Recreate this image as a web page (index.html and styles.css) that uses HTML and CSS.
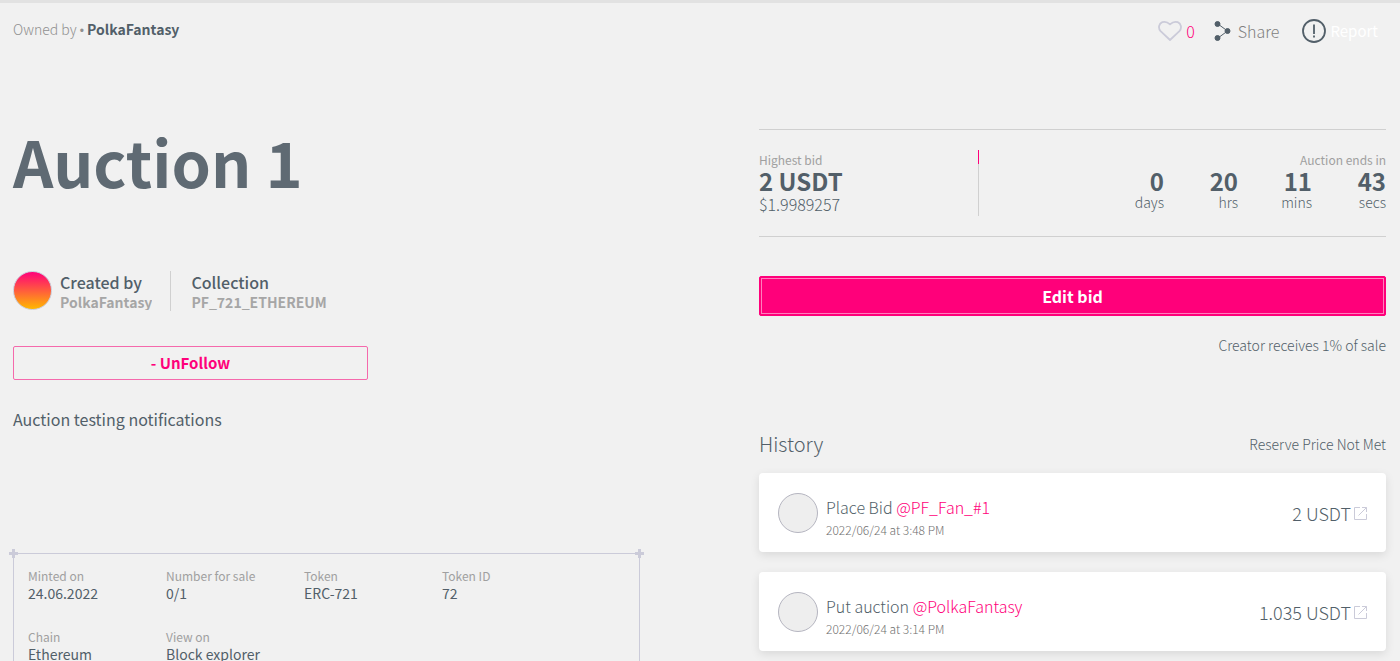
FILE: index.html
```html
<!DOCTYPE html>
<html lang="en">
<head>
    <meta charset="UTF-8">
    <meta name="viewport" content="width=device-width, initial-scale=1.0">
    <title>Auction 1</title>
    <link rel="stylesheet" href="styles.css">
</head>
<body>
    <main class="page">
        <section class="column">
            <div class="owner">Owned by <span class="dot">•</span> <a href="#">PolkaFantasy</a></div>

            <h1>Auction 1</h1>

            <div class="credits">
                <span class="creator-avatar"></span>
                <div class="credit">
                    <h2>Created by</h2>
                    <a href="#">PolkaFantasy</a>
                </div>
                <div class="credit credit-collection">
                    <h2>Collection</h2>
                    <a href="#">PF_721_ETHEREUM</a>
                </div>
            </div>

            <button type="button" class="follow-btn">- UnFollow</button>

            <p class="description">Auction testing notifications</p>

            <dl class="details">
                <div class="detail">
                    <dt>Minted on</dt>
                    <dd>24.06.2022</dd>
                </div>
                <div class="detail">
                    <dt>Number for sale</dt>
                    <dd>0/1</dd>
                </div>
                <div class="detail">
                    <dt>Token</dt>
                    <dd>ERC-721</dd>
                </div>
                <div class="detail">
                    <dt>Token ID</dt>
                    <dd>72</dd>
                </div>
                <div class="detail">
                    <dt>Chain</dt>
                    <dd>Ethereum</dd>
                </div>
                <div class="detail">
                    <dt>View on</dt>
                    <dd><a href="#">Block explorer</a></dd>
                </div>
            </dl>
        </section>

        <section class="column">
            <div class="actions">
                <button type="button" class="action like">
                    <svg width="24" height="22" viewBox="0 0 24 22" fill="none" stroke="#cbcbd9" stroke-width="1.8" stroke-linejoin="round">
                        <path d="M12 20 2.600 11.200C-.2 8 .9 3.600 4.300 2.200 7 1.200 9.500 2 12 4.300 14.500 2 17 1.200 19.700 2.200 23.100 3.600 24.200 8 21.400 11.200Z"/>
                    </svg>
                    <span>0</span>
                </button>
                <button type="button" class="action share">
                    <svg width="18" height="22" viewBox="0 0 18 22" fill="#525f69" stroke="#525f69" stroke-width="1">
                        <path d="M4 4 13.500 11 4 18" fill="none"/>
                        <circle cx="3.500" cy="4" r="2.500"/>
                        <circle cx="13.500" cy="11" r="2.500"/>
                        <circle cx="3.500" cy="18" r="2.500"/>
                    </svg>
                    <span>Share</span>
                </button>
                <button type="button" class="action report">
                    <svg width="24" height="24" viewBox="0 0 24 24" fill="none" stroke="#525f69" stroke-width="1.800">
                        <circle cx="12" cy="12" r="11"/>
                        <path d="M12 5.500V15M12 16.500V18.500"/>
                    </svg>
                    <span>Report</span>
                </button>
            </div>

            <div class="bid-info">
                <div class="highest">
                    <div class="caption">Highest bid</div>
                    <div class="amount">2 USDT</div>
                    <div class="fiat">$1.9989257</div>
                </div>
                <div class="ends">
                    <div class="caption">Auction ends in</div>
                    <div class="countdown">
                        <div class="unit"><div class="amount">0</div>days</div>
                        <div class="unit"><div class="amount">20</div>hrs</div>
                        <div class="unit"><div class="amount">11</div>mins</div>
                        <div class="unit"><div class="amount">43</div>secs</div>
                    </div>
                </div>
            </div>

            <button type="button" class="bid-btn">Edit bid</button>
            <p class="royalty">Creator receives 1% of sale</p>

            <div class="history-header">
                <h2>History</h2>
                <span>Reserve Price Not Met</span>
            </div>

            <div class="history">
                <div class="event">
                    <span class="event-avatar"></span>
                    <div class="event-text">
                        <div class="event-title">Place Bid <a href="#">@PF_Fan_#1</a></div>
                        <div class="event-date">2022/06/24 at 3:48 PM</div>
                    </div>
                    <div class="event-price">2 USDT</div>
                    <a href="#" class="event-link" aria-label="View transaction">
                        <svg width="13" height="13" viewBox="0 0 13 13" fill="none" stroke="#cbcbd9">
                            <path d="M6 .5H.5V12.500H12.500V7M8 .5H12.500V5M12.500.5 4.500 8.500"/>
                        </svg>
                    </a>
                </div>
                <div class="event">
                    <span class="event-avatar"></span>
                    <div class="event-text">
                        <div class="event-title">Put auction <a href="#">@PolkaFantasy</a></div>
                        <div class="event-date">2022/06/24 at 3:14 PM</div>
                    </div>
                    <div class="event-price">1.035 USDT</div>
                    <a href="#" class="event-link" aria-label="View transaction">
                        <svg width="13" height="13" viewBox="0 0 13 13" fill="none" stroke="#cbcbd9">
                            <path d="M6 .5H.5V12.500H12.500V7M8 .5H12.500V5M12.500.5 4.500 8.500"/>
                        </svg>
                    </a>
                </div>
            </div>
        </section>
    </main>
</body>
</html>
```
FILE: styles.css
```css
* {
    box-sizing: border-box;
}
body {
    margin: 0;
    border-top: 3px solid #e2e2e2;
    background-color: #f1f1f1;
    color: #525f69;
    font-family: "Noto Sans CJK SC", "Noto Sans", sans-serif;
    font-size: 14px;
    line-height: 20px;
}
h1, h2, p, dl, dd {
    margin: 0;
}
a {
    color: inherit;
    text-decoration: none;
}
button {
    font-family: inherit;
    cursor: pointer;
}
svg {
    display: block;
}
.page {
    display: grid;
    grid-template-columns: 1fr 1fr;
    column-gap: 119px;
    padding: 16px 14px 0 13px;
}

/* Left column */
.owner {
    color: #909090;
    font-weight: 300;
}
.owner .dot {
    font-family: "Liberation Sans", sans-serif;
    font-size: 12px;
    line-height: 12px;
}
.owner a {
    color: #525f69;
    font-weight: 700;
}
h1 {
    margin-top: 84px;
    color: #5f6a73;
    font-size: 63px;
    line-height: 76px;
    font-weight: 700;
}
.credits {
    display: flex;
    margin-top: 72px;
    height: 40px;
}
.creator-avatar {
    width: 39px;
    height: 39px;
    margin-right: 8px;
    border: 1px solid #cbcbd9;
    border-radius: 50%;
    background: linear-gradient(#ff007a, #ffb800);
}
.credit h2 {
    font-size: 16px;
    line-height: 22px;
    font-weight: 500;
}
.credit a {
    display: block;
    overflow: hidden;
    height: 17px;
    color: #a6a6a6;
    font-weight: 700;
    line-height: 18px;
}
.credit-collection {
    margin-left: 18px;
    padding-left: 20px;
    border-left: 1px solid #d0d0d0;
}
.follow-btn {
    display: block;
    width: 355px;
    max-width: 100%;
    height: 34px;
    margin-top: 35px;
    padding: 0 0 2px;
    border: 1px solid #f569ac;
    border-radius: 2px;
    background: none;
    color: #ff007a;
    font-size: 15px;
    font-weight: 700;
}
.description {
    margin-top: 29px;
    font-size: 16px;
}
.details {
    position: relative;
    display: grid;
    grid-template-columns: repeat(4, 138px);
    row-gap: 26px;
    margin-top: 124px;
    padding: 13px 14px;
    border: 1px solid #cbcbd9;
}
/* Small crosses on the frame corners */
.details::before,
.details::after {
    content: "";
    position: absolute;
    top: -5px;
    width: 9px;
    height: 9px;
    background: linear-gradient(#cbcbd9, #cbcbd9) center / 9px 3px no-repeat,
        linear-gradient(#cbcbd9, #cbcbd9) center / 3px 9px no-repeat;
}
.details::before {
    left: -5px;
}
.details::after {
    right: -5px;
}
.detail dt {
    color: #a0a0a0;
    font-size: 12px;
    line-height: 17px;
}
.detail dd {
    font-size: 14px;
    line-height: 18px;
}

/* Right column */
.actions {
    display: flex;
    justify-content: flex-end;
    height: 24px;
    padding-right: 8px;
}
.action {
    display: flex;
    align-items: center;
    padding: 0;
    border: 0;
    background: none;
    font-size: 16px;
    line-height: 24px;
}
.like {
    gap: 4px;
    color: #ff007a;
    font-weight: 300;
}
.share {
    gap: 6px;
    margin-left: 19px;
    color: #808080;
    font-weight: 300;
}
.report {
    gap: 4px;
    margin-left: 23px;
    color: #fff;
    font-size: 15px;
}
.bid-info {
    display: flex;
    height: 108px;
    margin-top: 86px;
    padding: 20px 0;
    border-top: 1px solid #d0d0d0;
    border-bottom: 1px solid #d0d0d0;
}
.caption {
    color: #a0a0a0;
    font-size: 12px;
    line-height: 20px;
}
.amount {
    font-size: 24px;
    line-height: 22px;
    font-weight: 700;
}
.highest {
    width: 35%;
}
.fiat {
    font-size: 16px;
    line-height: 24px;
    font-weight: 300;
}
.ends {
    flex: 1;
    border-left: 1px solid;
    border-image: linear-gradient(#ff007a 15px, #d0d0d0 15px) 1;
    text-align: right;
}
.countdown {
    display: flex;
    justify-content: flex-end;
}
.unit {
    width: 74px;
    font-weight: 300;
}
.bid-btn {
    display: block;
    width: 100%;
    height: 40px;
    margin-top: 39px;
    border: 1px solid #ff007a;
    border-radius: 2px;
    outline: 1px solid #ff7fbc;
    outline-offset: -3px;
    background-color: #ff007a;
    color: #fff;
    font-size: 16px;
    font-weight: 700;
}
.royalty {
    margin-top: 19px;
    font-weight: 300;
    text-align: right;
}
.history-header {
    display: flex;
    align-items: center;
    justify-content: space-between;
    margin-top: 73px;
    font-weight: 300;
}
.history-header h2 {
    font-size: 20px;
    line-height: 32px;
    font-weight: 300;
}
.history {
    display: grid;
    gap: 20px;
    margin-top: 13px;
}
.event {
    display: flex;
    align-items: center;
    height: 79px;
    padding: 0 19px;
    border-radius: 4px;
    background-color: #fff;
    box-shadow: 0 3px 10px rgba(0, 0, 0, 0.1);
}
.event-avatar {
    width: 40px;
    height: 40px;
    margin-right: 8px;
    border: 1px solid #b5b5c0;
    border-radius: 50%;
    background-color: #eee;
}
.event-text {
    flex: 1;
    padding-top: 10px;
}
.event-title {
    font-size: 16px;
    line-height: 24px;
    font-weight: 300;
}
.event-title a {
    color: #ff007a;
}
.event-date {
    color: #707070;
    font-size: 12px;
    line-height: 22px;
    font-weight: 300;
}
.event-price {
    font-size: 18px;
    font-weight: 300;
}
.event-link {
    margin-left: 3px;
    padding-top: 2px;
}

@media (max-width: 900px) {
    .page {
        grid-template-columns: 1fr;
        row-gap: 40px;
    }
    .details {
        grid-template-columns: 1fr 1fr;
    }
}
```
